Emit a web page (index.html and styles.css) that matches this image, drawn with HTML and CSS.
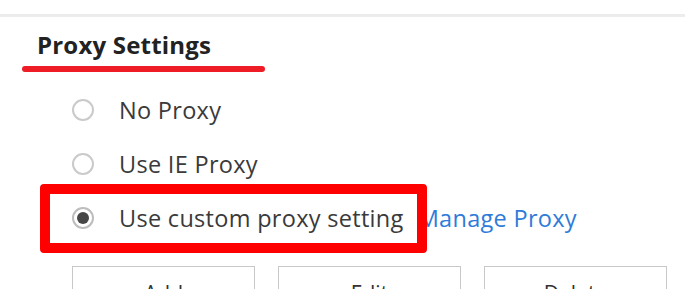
FILE: index.html
```html
<!DOCTYPE html>
<html lang="en">
<head>
    <meta charset="UTF-8">
    <meta name="viewport" content="width=device-width, initial-scale=1.0">
    <title>Proxy Settings</title>
    <link rel="stylesheet" href="styles.css">
</head>
<body>
    <div class="top-bar"></div>
    <div class="settings-panel">
        <h2 class="section-title">Proxy Settings</h2>
        <div class="title-mark"></div>

        <div class="options">
            <label class="option">
                <span class="radio"></span>
                <span class="option-text">No Proxy</span>
            </label>
            <label class="option">
                <span class="radio"></span>
                <span class="option-text">Use IE Proxy</span>
            </label>
            <div class="option marked">
                <span class="radio checked"></span>
                <span class="option-text">Use custom proxy setting</span>
                <a href="#" class="manage-link">Manage Proxy</a>
                <div class="mark-box"></div>
            </div>
        </div>

        <div class="button-row">
            <button class="btn">Add</button>
            <button class="btn">Edit</button>
            <button class="btn">Delete</button>
        </div>
    </div>
</body>
</html>
```

FILE: styles.css
```css
body {
    margin: 0;
    background-color: #fff;
    font-family: "Open Sans", "DejaVu Sans", sans-serif;
    color: #3a3a3a;
    overflow: hidden;
}
.top-bar {
    height: 14px;
    border-bottom: 3px solid #ececec;
}
.settings-panel {
    padding-left: 37px;
}
.section-title {
    margin: 13px 0 0;
    font-size: 24px;
    line-height: 30px;
    font-weight: bold;
    color: #222;
    letter-spacing: 0.2px;
}
.title-mark {
    margin: 6px 0 0 -15px;
    width: 243px;
    height: 6px;
    border-radius: 3px;
    background-color: #ee1c25;
}
.options {
    margin-top: 11px;
    margin-left: -37px;
}
.option {
    display: flex;
    align-items: center;
    height: 54px;
    padding-left: 72px;
    font-size: 23.5px;
    letter-spacing: 0.3px;
    position: relative;
}
.radio {
    width: 18px;
    height: 18px;
    border: 2px solid #cacaca;
    border-radius: 50%;
    display: flex;
    align-items: center;
    justify-content: center;
    flex-shrink: 0;
}
.radio.checked {
    border-color: #bdbdbd;
}
.radio.checked::after {
    content: "";
    width: 12px;
    height: 12px;
    border-radius: 50%;
    background-color: #474747;
}
.option-text {
    margin-left: 25px;
}
.manage-link {
    margin-left: 14px;
    color: #2f7bd9;
    text-decoration: none;
}
.mark-box {
    position: absolute;
    left: 40px;
    top: -7px;
    width: 367px;
    height: 49px;
    border: 10px solid #ff0000;
    border-radius: 4px;
}
.button-row {
    display: flex;
    gap: 23px;
    margin-top: 21px;
    padding-left: 35px;
}
.btn {
    width: 183px;
    height: 42px;
    background-color: #fff;
    border: 1px solid #c8c8c8;
    font-family: inherit;
    font-size: 21px;
    color: #333;
    padding-top: 12px;
}
```
